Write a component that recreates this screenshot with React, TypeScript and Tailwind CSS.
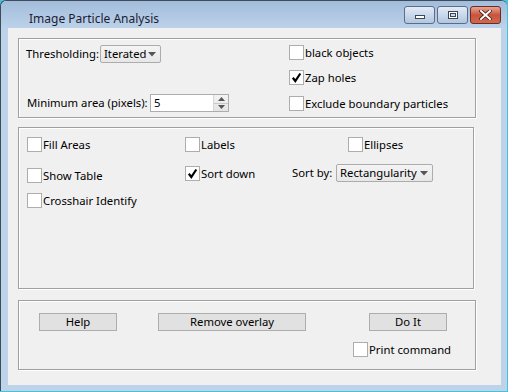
import React from 'react';

const Check = ({ checked, label }: { checked?: boolean; label: string }) => (
  <div className="flex items-center gap-[1px] h-[15px]">
    <div className="w-[15px] h-[15px] bg-white border border-[#adadad] flex items-center justify-center shrink-0">
      {checked && (
        <svg width="11" height="11" viewBox="0 0 11 11">
          <path d="M1.8 5.8 L4.3 9 L9.3 1.5" fill="none" stroke="#000" strokeWidth="2.2" />
        </svg>
      )}
    </div>
    <span className="whitespace-nowrap leading-none">{label}</span>
  </div>
);

const Choice = ({ text, w }: { text: string; w: string }) => (
  <div className={`${w} h-[18px] shrink-0 flex items-center justify-between pl-[3px] pr-[4px] border border-[#acacac] rounded-[2px] bg-linear-to-b from-[#f4f4f4] to-[#e7e7e7]`}>
    <span className="leading-none whitespace-nowrap">{text}</span>
    <svg width="8" height="5" viewBox="0 0 8 5">
      <path d="M0 0 H8 L4 4.5 Z" fill="#555" />
    </svg>
  </div>
);

const Btn = ({ text, w }: { text: string; w: string }) => (
  <button className={`${w} h-[18px] flex items-center justify-center bg-[#e1e1e1] border border-[#adadad] leading-none`}>
    {text}
  </button>
);

const panel = 'border border-[#a0a0a0] shadow-[1px_1px_0_#fff,inset_1px_1px_0_#fff]';

export default function App() {
  return (
    <div className="w-[508px] h-[392px] bg-[#44c3dc] overflow-hidden font-['Noto_Sans',sans-serif] text-[11.3px] text-black">
      <div className="w-[507px] h-[391px] flex flex-col bg-[#bdd3ea] border-l border-t border-[#3e4b5b] rounded-t-[6px]">
        {/* title bar */}
        <div className="h-[27px] flex items-start bg-linear-to-b from-[#a2bcda] to-[#bcd2ea] rounded-t-[6px]">
          <span className="pl-[28px] pt-[12px] leading-none text-[12px] text-[#1c1c34]">Image Particle Analysis</span>
          <div className="ml-auto flex gap-[2px] pt-[5px] pr-[6px]">
            <div className="w-[31px] h-[18px] rounded-[3px] border border-[#5d6d86] bg-linear-to-b from-[#e3ebf6] via-[#c9d8ec] to-[#b2c6e0] flex items-end justify-center pb-[4px]">
              <div className="w-[10px] h-[4px] bg-white border border-[#3b4656]" />
            </div>
            <div className="w-[31px] h-[18px] rounded-[3px] border border-[#5d6d86] bg-linear-to-b from-[#e3ebf6] via-[#c9d8ec] to-[#b2c6e0] flex items-center justify-center">
              <div className="w-[10px] h-[8px] border border-[#3b4656] bg-white p-[1px]">
                <div className="w-full h-full border border-[#3b4656] bg-[#c9d8ec]" />
              </div>
            </div>
            <div className="w-[31px] h-[18px] rounded-[3px] border border-[#6b2a22] bg-linear-to-b from-[#e4a594] via-[#c9533d] to-[#d06a50] flex items-center justify-center">
              <svg width="13" height="10" viewBox="0 0 13 10">
                <path d="M2 1 L11 9 M11 1 L2 9" stroke="#4a2018" strokeWidth="3.6" strokeLinecap="square" />
                <path d="M2 1 L11 9 M11 1 L2 9" stroke="#fff" strokeWidth="2" strokeLinecap="square" />
              </svg>
            </div>
          </div>
        </div>

        {/* body */}
        <div className="flex-1 flex pl-[7px] pr-[6px] pb-[6px]">
          <div className="flex-1 bg-[#f0f0f0] flex flex-col pl-[10px] pt-[10px]">
            {/* panel 1 */}
            <div className={`${panel} w-[458px] h-[80px] flex pt-[6px]`}>
              <div className="w-[270px] pl-[7px] flex flex-col">
                <div className="flex items-center h-[18px]">
                  <span className="w-[74px] shrink-0 whitespace-nowrap">Thresholding:</span>
                  <Choice text="Iterated" w="w-[61px]" />
                </div>
                <div className="flex items-center h-[18px] mt-[31px] pl-[1px]">
                  <span className="w-[123px] shrink-0 whitespace-nowrap">Minimum area (pixels):</span>
                  <div className="w-[79px] h-[18px] shrink-0 bg-white border border-[#abadb3] flex items-stretch">
                    <span className="flex-1 pl-[3px] leading-[16px]">5</span>
                    <div className="w-[15px] flex flex-col border-l border-[#d6d6d6] bg-linear-to-b from-[#f3f3f3] to-[#e4e4e4]">
                      <div className="flex-1 flex items-center justify-center border-b border-[#c8c8c8]">
                        <svg width="7" height="4" viewBox="0 0 7 4"><path d="M0 4 H7 L3.5 0 Z" fill="#555" /></svg>
                      </div>
                      <div className="flex-1 flex items-center justify-center">
                        <svg width="7" height="4" viewBox="0 0 7 4"><path d="M0 0 H7 L3.5 4 Z" fill="#555" /></svg>
                      </div>
                    </div>
                  </div>
                </div>
              </div>
              <div className="flex flex-col">
                <Check label="black objects" />
                <div className="mt-[10px]"><Check checked label="Zap holes" /></div>
                <div className="mt-[11px]"><Check label="Exclude boundary particles" /></div>
              </div>
            </div>

            {/* panel 2 */}
            <div className={`${panel} w-[456px] h-[162px] mt-[9px] flex flex-col pl-[8px] pt-[9px]`}>
              <div className="flex">
                <div className="w-[158px]"><Check label="Fill Areas" /></div>
                <div className="w-[163px]"><Check label="Labels" /></div>
                <Check label="Ellipses" />
              </div>
              <div className="flex items-start h-[19px] mt-[12px]">
                <div className="w-[158px] mt-[4px]"><Check label="Show Table" /></div>
                <div className="w-[107px] mt-[2px]"><Check checked label="Sort down" /></div>
                <span className="w-[44px] h-[18px] flex items-center whitespace-nowrap">Sort by:</span>
                <Choice text="Rectangularity" w="w-[97px]" />
              </div>
              <div className="mt-[10px]"><Check label="Crosshair Identify" /></div>
            </div>

            {/* panel 3 */}
            <div className={`${panel} w-[458px] h-[70px] mt-[11px] flex flex-col pt-[12px]`}>
              <div className="flex pl-[20px]">
                <Btn text="Help" w="w-[78px]" />
                <div className="ml-[41px]"><Btn text="Remove overlay" w="w-[148px]" /></div>
                <div className="ml-[63px]"><Btn text="Do It" w="w-[78px]" /></div>
              </div>
              <div className="pl-[334px] mt-[11px]"><Check label="Print command" /></div>
            </div>
          </div>
        </div>
      </div>
    </div>
  );
}
